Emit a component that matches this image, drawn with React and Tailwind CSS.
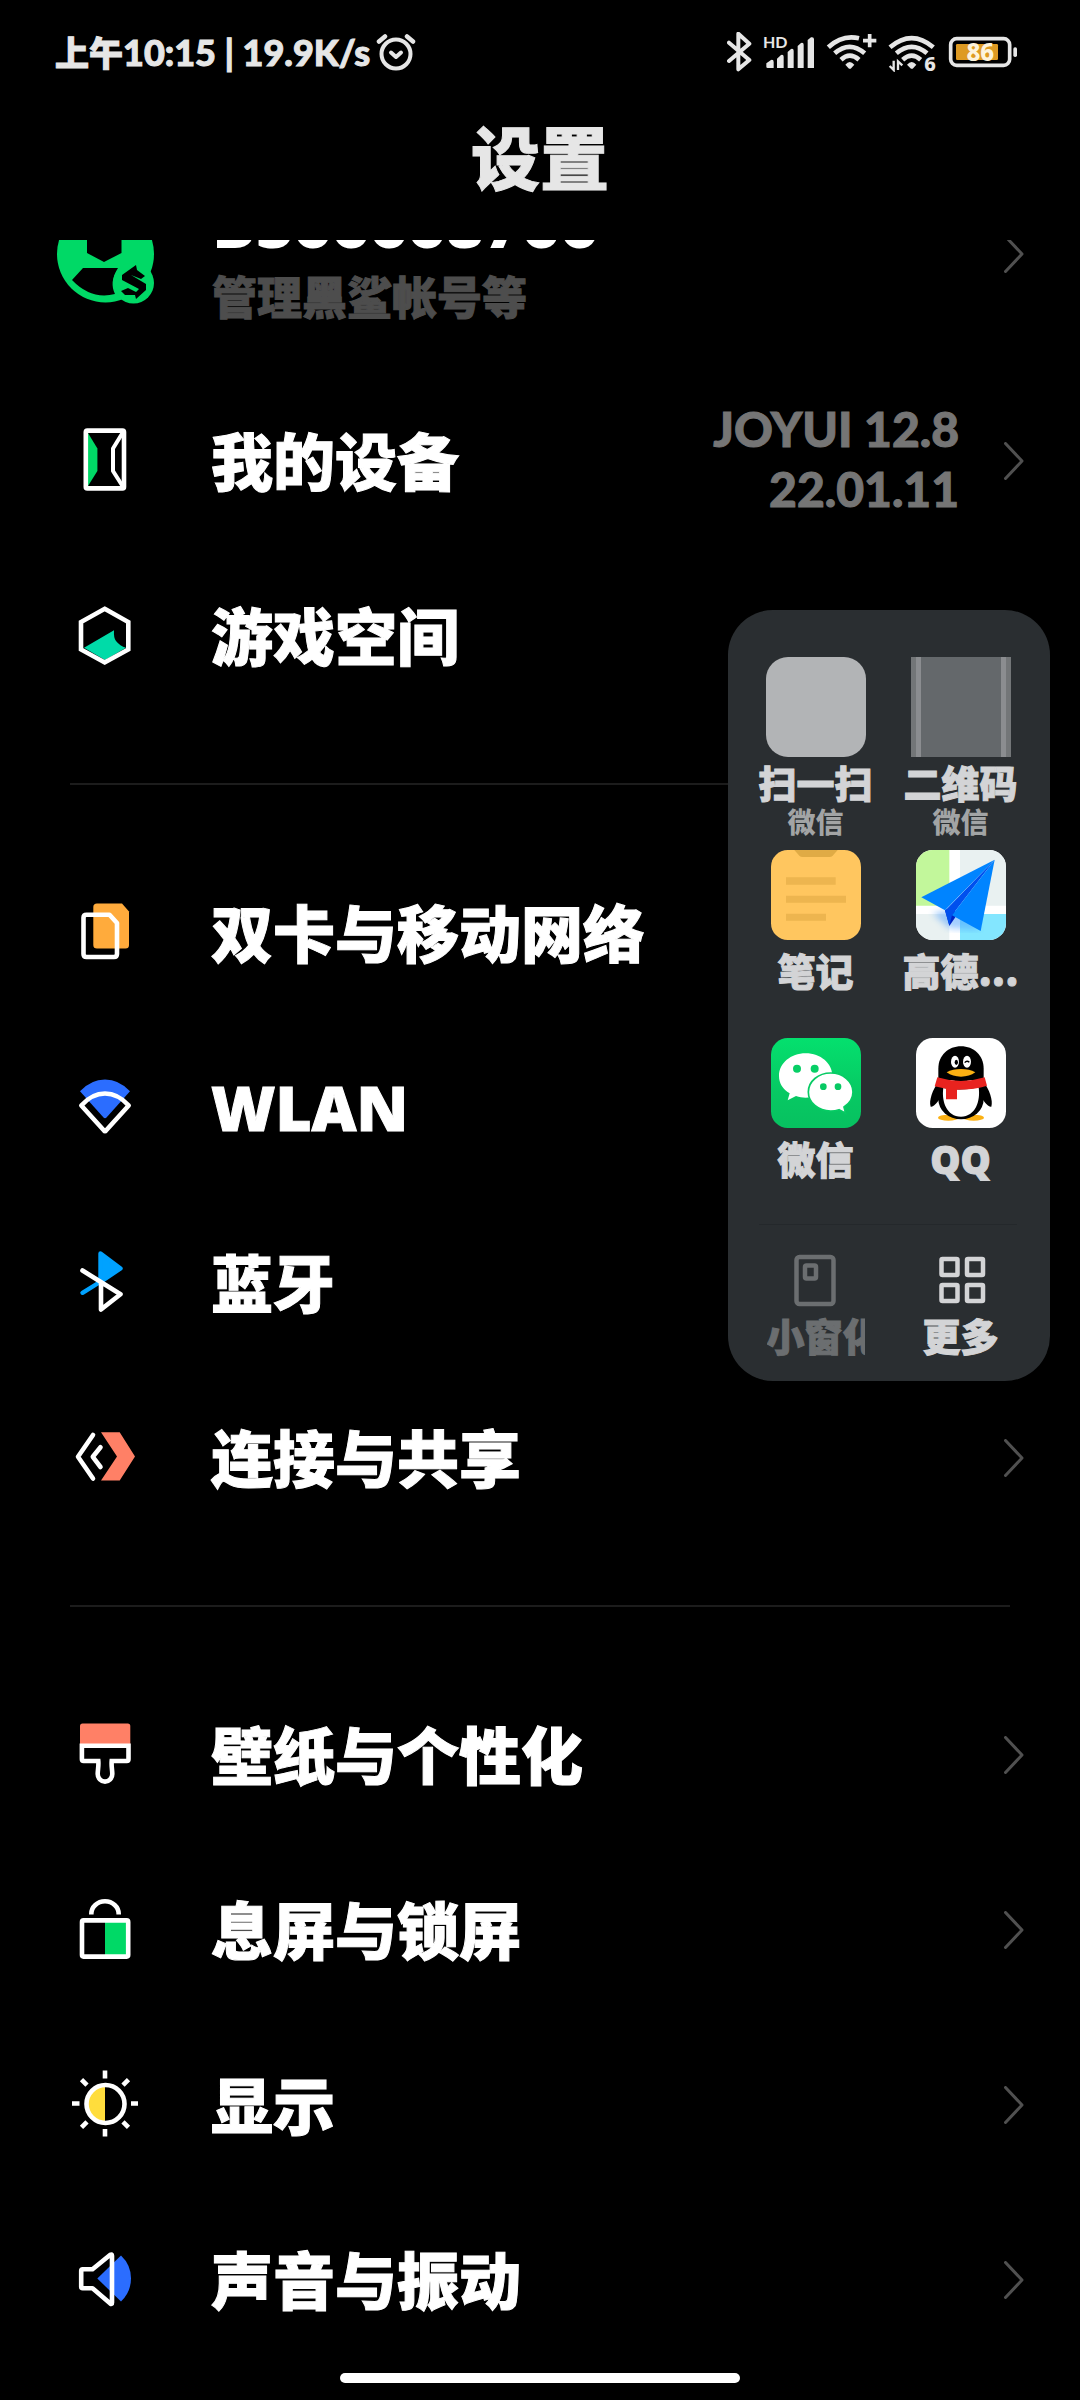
import React from "react";

const CJK = "font-['Noto_Sans_CJK_SC',sans-serif]";

function Icon({ children }) {
  return (
    <svg viewBox="0 0 70 70" className="h-[70px] w-[70px] shrink-0" fill="none" aria-hidden="true">
      {children}
    </svg>
  );
}

const white = { stroke: "#fff", strokeWidth: 4.6, strokeLinecap: "round", strokeLinejoin: "round" };

const DeviceIcon = () => (
  <Icon>
    <path d="M18 7L27.4 22.5V45L18 60Z" fill="#00d966" />
    <rect x="15.8" y="4.6" width="38.2" height="57.8" rx="1.5" {...white} />
    <path d="M52.5 7L43 22.5V45L52.5 60" {...white} strokeWidth="4" />
  </Icon>
);
const GameIcon = () => (
  <Icon>
    <path d="M14 46.8L44 29.2Q43.5 37 46 40Q50 45 56 46.8L35 59Z" fill="#00dba8" />
    <path d="M34.7 7.8L58.3 21V48.5L34.7 61.5L11 48.5V21Z" {...white} strokeLinejoin="miter" />
  </Icon>
);
const SimIcon = () => (
  <Icon>
    <path d="M27 5.5H52L59 13.5V47Q59 50.5 55.5 50.5H27Q23.3 50.5 23.3 47V9Q23.3 5.5 27 5.5Z" fill="#ffab3c" />
    <path d="M16.5 16.7H39.5L47 25V56Q47 59 44 59H16.5Q13.5 59 13.5 56V19.7Q13.5 16.7 16.5 16.7Z" {...white} />
  </Icon>
);
const WlanIcon = () => (
  <Icon>
    <path d="M10 18.2Q21 6.5 35 6.5T60 18.2L36.5 44.5Q35 46 33.5 44.5Z" fill="#2b6dff" />
    <path d="M11.3 32.5Q22 20.5 35 20.5T58.7 32.5L36 57.5Q35 58.8 34 57.5Z" {...white} />
  </Icon>
);
const BluetoothIcon = () => (
  <Icon>
    <path d="M12.5 44.8L30 34" stroke="#00a2ff" strokeWidth="4.4" strokeLinecap="round" />
    <path d="M30.5 5.5L50.5 20.5L30.5 34Z" fill="#00a2ff" stroke="#00a2ff" strokeWidth="4.4" strokeLinejoin="round" />
    <path d="M12.5 22.5L50.5 46.2L31 61.5V35" {...white} />
  </Icon>
);
const ShareIcon = () => (
  <Icon>
    <path d="M31 9.2H49.7L65 33.5L49.7 57.5H31L47 33.5Z" fill="#ff8066" />
    <path d="M23 12L8 33.8L23 55.5" {...white} />
    <path d="M30.5 24.2L22.8 33.8L30.5 44" {...white} />
  </Icon>
);
const BrushIcon = () => (
  <Icon>
    <path d="M10 24V6Q10 3.5 12.5 3.5H57.8Q60.3 3.5 60.3 6V24Z" fill="#ff8066" />
    <path d="M11.9 25.7H58.5V39.3Q58.5 41 56.8 41H41.7C41.2 46 42.2 49 42.3 54A7.2 7.5 0 0 1 27.7 54C27.8 49 28.8 46 28.3 41H13.6Q11.9 41 11.9 39.3Z" {...white} strokeLinejoin="miter" />
  </Icon>
);
const LockIcon = () => (
  <Icon>
    <rect x="35" y="26" width="22" height="34" fill="#00d966" />
    <rect x="12" y="25.4" width="46.2" height="36.2" rx="1.5" {...white} />
    <path d="M21.3 19.5V19A13.7 12.7 0 0 1 48.7 19V19.5" {...white} strokeLinecap="butt" />
  </Icon>
);
const SunIcon = () => (
  <Icon>
    <path d="M35 15A19 19 0 0 0 35 53Z" fill="#ffdd3c" />
    <circle cx="35.5" cy="34" r="19" {...white} />
    <path d="M35 .5V8.5M35 59V66.5M2 33.5H9.5M61 33.5H68M11.5 9.7L17 15.2M58.5 9.7L53 15.2M11.5 57.3L17 51.8M58.5 57.3L53 51.8" {...white} strokeLinecap="butt" />
  </Icon>
);
const SoundIcon = () => (
  <Icon>
    <path d="M27.3 33.5L51 10.5Q61 20 61 33.5T51 56.5Z" fill="#2b6dff" />
    <path d="M12.7 24.3H22.5L40.3 9.8Q42 8.8 42 10.8V57.5Q42 59.7 40.3 58.5L22.5 43.3H12.7Q11.2 43.3 11.2 41.8V25.8Q11.2 24.3 12.7 24.3Z" {...white} />
  </Icon>
);

function Chevron() {
  return (
    <svg viewBox="0 0 20 38" className="h-[38px] w-5 shrink-0" fill="none" aria-hidden="true">
      <path d="M1.5 1.5L18 19L1.5 36.5" stroke="#505050" strokeWidth="3" strokeLinecap="round" strokeLinejoin="round" />
    </svg>
  );
}

function Row({ icon, label, value }) {
  return (
    <a href="#" className="flex h-[175px] items-center pr-14 pl-[70px]">
      {icon}
      <span className="ml-[71px] flex-1 pb-1 text-[62px] leading-[90px] font-black whitespace-nowrap text-white [-webkit-text-stroke:1px]">{label}</span>
      {value && (
        <span className="mr-[45px] pb-1 text-right font-['Lato',sans-serif] text-[48px] leading-[60px] font-black whitespace-pre-line text-[#757575] [-webkit-text-stroke:1px]">
          {value}
        </span>
      )}
      <Chevron />
    </a>
  );
}

const Divider = () => <hr className="mx-[70px] my-[60px] h-[2px] border-0 bg-[#1c1c1c]" />;

function StatusBar() {
  return (
    <div className="flex h-[96px] items-center justify-between pt-2 pr-[62px] pl-[55px]">
      <div className="flex items-center gap-[6px]">
        <span className="text-[34px] leading-[48px] font-black whitespace-nowrap [-webkit-text-stroke:1px]">
          上午<span className="font-['Lato',sans-serif] text-[36px]">10:15 | 19.9K/s</span>
        </span>
        <svg viewBox="0 0 40 40" className="h-10 w-10" fill="none" stroke="#e6e6e6" strokeLinecap="round" strokeLinejoin="round" aria-hidden="true">
          <circle cx="20" cy="22" r="14.5" strokeWidth="4" />
          <path d="M15 20.5L20 25L25 20.5" strokeWidth="4" />
          <path d="M3 9.5L9 4.5M37 9.5L31 4.5" strokeWidth="4.5" />
        </svg>
      </div>
      <div className="flex items-center gap-[11px]">
        <svg viewBox="146 96 75 120" className="h-10 w-[25px]" fill="none" aria-hidden="true">
          <path d="M152 128L213 180L180 208V101L213 131L152 183" stroke="#e6e6e6" strokeWidth="12" strokeLinecap="round" strokeLinejoin="round" />
        </svg>
        <svg viewBox="252 96 156 120" className="h-10 w-[52px]" fill="#e6e6e6" aria-hidden="true">
          <text x="252" y="143" fontFamily="Lato, sans-serif" fontSize="48" fontWeight="700">HD</text>
          <path d="M262 200V190L276 180Q284 178 284 186V204H266Q262 204 262 200ZM294 204V176L306 165Q314 163 314 170V204ZM326 204V156L336 147Q344 145 344 152V204ZM356 204V138L366 129Q374 127 374 134V204ZM386 204V120L396 112Q405 110 405 118V204Z" />
        </svg>
        <svg viewBox="441 96 153 120" className="h-10 w-[51px]" fill="none" stroke="#e6e6e6" strokeWidth="14" aria-hidden="true">
          <path d="M448 142Q490 103 540 115" />
          <path d="M467 160Q512 121 557 160" />
          <path d="M486 179Q512 155 540 179" />
          <path d="M499 194Q512 178 526 194L515 206H510Z" fill="#e6e6e6" stroke="none" />
          <path d="M552 122H592M572 102V142" strokeWidth="11" />
        </svg>
        <svg viewBox="621 96 147 120" className="h-10 w-[49px]" fill="none" stroke="#e6e6e6" strokeWidth="14" aria-hidden="true">
          <path d="M627 142Q692 87 757 142" />
          <path d="M646 160Q692 121 738 160" />
          <path d="M665 179Q692 155 719 179" />
          <path d="M678 194Q692 178 706 194L695 206H690Z" fill="#e6e6e6" stroke="none" />
          <path d="M638 182V210L626 198M651 210V184L664 196" strokeWidth="7" />
          <text x="730" y="214" fill="#e6e6e6" stroke="none" fontFamily="Noto Sans, sans-serif" fontSize="60" fontWeight="800">6</text>
        </svg>
        <svg viewBox="804 96 210 120" className="h-10 w-[70px]" fill="none" aria-hidden="true">
          <rect x="828" y="132" width="126" height="48" rx="4" fill="#de9a22" />
          <rect x="812" y="116" width="177" height="80" rx="18" stroke="#e6e6e6" strokeWidth="11" />
          <rect x="1000" y="142" width="11" height="29" rx="5" fill="#e6e6e6" />
          <text x="901" y="184" textAnchor="middle" fill="#fdf3dc" fontFamily="Noto Sans, sans-serif" fontSize="72" fontWeight="800">86</text>
        </svg>
      </div>
    </div>
  );
}

function Avatar() {
  return (
    <svg viewBox="0 0 100 100" className="h-[100px] w-[100px] shrink-0" aria-hidden="true">
      <circle cx="49.5" cy="50" r="48.5" fill="#00d966" />
      <path d="M31 0V49L48 58L65.5 49V0Z" fill="#000" />
      <path d="M27 64H62Q53 78 59 90Q35 96 16 76Z" fill="#000" />
      <circle cx="77.500" cy="79" r="20.5" fill="#00d966" />
      <path d="M66 71L80 61L81 66L89 72L85 75L75 71L90 80V86L80 95L79 91H69L65 87L72 84L80 88L83 85L66 76Z" fill="#000" />
    </svg>
  );
}

const NotesIcon = () => (
  <svg viewBox="0 0 270 270" className="size-[90px]" aria-hidden="true">
    <rect width="270" height="270" rx="50" fill="#ffc65f" />
    <path d="M70 0H200L185 17Q181 21 175 21H95Q89 21 85 17Z" fill="#e0ab45" />
    <path d="M45 82H194V104H45ZM45 137H225V158H45ZM45 191H165V212H45Z" fill="#edb54f" />
  </svg>
);
const MapIcon = () => (
  <svg viewBox="0 0 270 270" className="size-[90px]" aria-hidden="true">
    <defs>
      <clipPath id="map-clip"><rect width="270" height="270" rx="50" /></clipPath>
      <filter id="map-soft"><feGaussianBlur stdDeviation="10" /></filter>
    </defs>
    <g clipPath="url(#map-clip)">
      <rect width="270" height="270" fill="#fff" />
      <path d="M0 0H100V167H0Z" fill="#c2f79b" />
      <path d="M132 0H270V167H132ZM0 192H100V270H0Z" fill="#e9f1f1" />
      <path d="M132 192H270V270H132Z" fill="#83e6ff" />
      <path d="M50 190L100 235L190 240L150 170Z" fill="#4a9dff" opacity=".5" filter="url(#map-soft)" />
      <path d="M87 180L100 228L122 196L110 170Z" fill="#0023c4" />
      <path d="M236 29L87 182L100 226L108 196Z" fill="#0050ee" />
      <path d="M236 29L16 142L87 181Z" fill="#0084ff" />
      <path d="M236 29L108 196L194 243Z" fill="#0084ff" />
    </g>
  </svg>
);
const WechatIcon = () => (
  <svg viewBox="0 0 270 270" className="size-[90px]" aria-hidden="true">
    <defs>
      <linearGradient id="wechat-bg" x1="0" y1="0" x2="0" y2="1">
        <stop stopColor="#04e06e" />
        <stop offset=".6" stopColor="#07c963" />
        <stop offset="1" stopColor="#07c160" />
      </linearGradient>
    </defs>
    <rect width="270" height="270" rx="50" fill="url(#wechat-bg)" />
    <path d="M104 46C59 46 24 76 24 114C24 136 36 154 56 166L50 187L75 174C85 178 94 179 104 179C149 179 184 150 184 114C184 76 149 46 104 46Z" fill="#fff" />
    <path d="M179 105C142 105 112 130 112 162C112 194 142 219 179 219C188 219 196 218 204 215L224 226L219 207C236 196 246 180 246 162C246 130 216 105 179 105Z" fill="#fff" stroke="#07cb64" strokeWidth="5" />
    <circle cx="78" cy="92" r="12" fill="#07cf66" />
    <circle cx="131" cy="92" r="12" fill="#07cf66" />
    <circle cx="157" cy="146" r="10" fill="#07c963" />
    <circle cx="201" cy="146" r="10" fill="#07c963" />
  </svg>
);
const QQIcon = () => (
  <svg viewBox="0 0 270 270" className="size-[90px]" aria-hidden="true">
    <rect width="270" height="270" rx="50" fill="#fff" />
    <ellipse cx="97" cy="239" rx="31" ry="9" fill="#fbb013" />
    <ellipse cx="173" cy="239" rx="31" ry="9" fill="#fbb013" />
    <path d="M68 130C50 155 38 188 44 206C52 208 62 196 70 184H200C208 196 218 208 226 206C232 188 220 155 202 130Z" fill="#000" />
    <ellipse cx="135" cy="184" rx="68" ry="60" fill="#000" />
    <path d="M67 126V92C67 52 97 25 135 25S203 52 203 92V126Z" fill="#000" />
    <path d="M82 150Q135 160 188 148C194 190 178 236 135 236S76 190 82 150Z" fill="#fff" />
    <path d="M64 118Q135 140 206 118L213 143Q178 155 123 155V184H90V152L56 145Z" fill="#e8231f" />
    <ellipse cx="117" cy="71" rx="12" ry="18" fill="#fff" />
    <ellipse cx="153" cy="71" rx="12" ry="18" fill="#fff" />
    <ellipse cx="121" cy="73" rx="5" ry="8" fill="#000" />
    <path d="M146 74Q153 66 160 73" fill="none" stroke="#000" strokeWidth="4" />
    <path d="M92 103Q110 93 135 93T178 103Q160 116 135 116T92 103Z" fill="#fbb013" />
  </svg>
);

function AppShortcut({ icon, label }) {
  return (
    <button type="button" className="flex w-full flex-col items-center">
      {icon}
      <span className="h-16 text-[38px] leading-[60px] font-black whitespace-nowrap [-webkit-text-stroke:1px]">{label}</span>
    </button>
  );
}

function ScanShortcut({ icon, label }) {
  return (
    <button type="button" className="flex w-full flex-col items-center">
      {icon}
      <span className="text-[38px] leading-[50px] font-black whitespace-nowrap [-webkit-text-stroke:1px]">{label}</span>
      <span className="text-[28px] leading-[28px] font-black text-[#a2a4a5]">微信</span>
    </button>
  );
}

function Sidebar() {
  return (
    <aside className="absolute top-[610px] right-[30px] w-[322px] rounded-[45px] bg-[#2a2e31] pt-[47px] pr-[17px] pb-[22px] pl-[15px] text-[#d3d4d6]">
      <div className="grid grid-cols-2">
        <ScanShortcut icon={<span className="size-[100px] rounded-[22px] bg-[#b2b4b6]" />} label="扫一扫" />
        <ScanShortcut
          icon={
            <span className="flex size-[100px] justify-between bg-[#64686b]">
              <span className="flex"><span className="w-[5px] bg-[#737678]" /><span className="w-[5px] bg-[#8b8d90]" /></span>
              <span className="flex"><span className="w-[5px] bg-[#8b8d90]" /><span className="w-[5px] bg-[#737678]" /></span>
            </span>
          }
          label="二维码"
        />
      </div>
      <div className="mt-[15px] grid grid-cols-2 gap-y-[34px]">
        <AppShortcut icon={<NotesIcon />} label="笔记" />
        <AppShortcut icon={<MapIcon />} label="高德..." />
        <AppShortcut icon={<WechatIcon />} label="微信" />
        <AppShortcut
          icon={<QQIcon />}
          label={<span className="font-['Open_Sans',sans-serif] text-[38px] font-extrabold">QQ</span>}
        />
      </div>
      <hr className="mx-4 mt-8 h-px border-0 bg-[#24282b]" />
      <div className="mt-[26px] grid grid-cols-2">
        <button type="button" disabled className="flex flex-col items-center text-[#6b6e70]">
          <svg viewBox="0 0 60 60" className="size-[60px]" fill="none" stroke="currentColor" aria-hidden="true">
            <rect x="10.5" y="6" width="37" height="47" rx="3" strokeWidth="4.5" />
            <rect x="19" y="14.5" width="11" height="13" rx="1.5" strokeWidth="4.5" />
          </svg>
          <span className="w-[98px] overflow-hidden text-left text-[38px] leading-[48px] font-black whitespace-nowrap [-webkit-text-stroke:1px]">小窗化</span>
        </button>
        <button type="button" className="flex flex-col items-center">
          <svg viewBox="0 0 60 60" className="size-[60px]" fill="none" stroke="currentColor" strokeWidth="4.5" aria-hidden="true">
            <rect x="10.5" y="8" width="16" height="16" rx="1" />
            <rect x="36" y="8" width="16" height="16" rx="1" />
            <rect x="10.5" y="34" width="16" height="16" rx="1" />
            <rect x="36" y="34" width="16" height="16" rx="1" />
          </svg>
          <span className="text-[38px] leading-[48px] font-black whitespace-nowrap [-webkit-text-stroke:1px]">更多</span>
        </button>
      </div>
    </aside>
  );
}

export default function App() {
  return (
    <div lang="zh-CN" className={`relative flex min-h-screen flex-col overflow-hidden bg-black text-[#e6e6e6] ${CJK}`}>
      <StatusBar />
      <header className="flex h-36 items-center justify-center pb-[26px]">
        <h1 className="text-[69px] leading-[100px] font-black [-webkit-text-stroke:1px]">设置</h1>
      </header>
      <main className="flex-1 overflow-hidden">
        <a href="#" className="-mt-[105px] flex h-[238px] items-center pr-14 pl-14">
          <Avatar />
          <span className="ml-[56px] flex flex-1 flex-col pt-3">
            <span className="font-['Open_Sans',sans-serif] text-[65px] leading-[72px] font-extrabold whitespace-nowrap text-white">BS66668766</span>
            <span className="text-[45px] leading-[74px] font-black whitespace-nowrap text-[#4d4d4d] [-webkit-text-stroke:1px]">管理黑鲨帐号等</span>
          </span>
          <Chevron />
        </a>
        <Row icon={<DeviceIcon />} label="我的设备" value={"JOYUI 12.8\n22.01.11"} />
        <Row icon={<GameIcon />} label="游戏空间" />
        <Divider />
        <Row icon={<SimIcon />} label="双卡与移动网络" />
        <Row icon={<WlanIcon />} label={<span className="font-['Open_Sans',sans-serif] font-extrabold">WLAN</span>} />
        <Row icon={<BluetoothIcon />} label="蓝牙" />
        <Row icon={<ShareIcon />} label="连接与共享" />
        <Divider />
        <Row icon={<BrushIcon />} label="壁纸与个性化" />
        <Row icon={<LockIcon />} label="息屏与锁屏" />
        <Row icon={<SunIcon />} label="显示" />
        <Row icon={<SoundIcon />} label="声音与振动" />
      </main>
      <footer className="flex h-8 items-start justify-center pt-[5px]">
        <div className="h-[10px] w-[400px] rounded-full bg-white" />
      </footer>
      <Sidebar />
    </div>
  );
}
